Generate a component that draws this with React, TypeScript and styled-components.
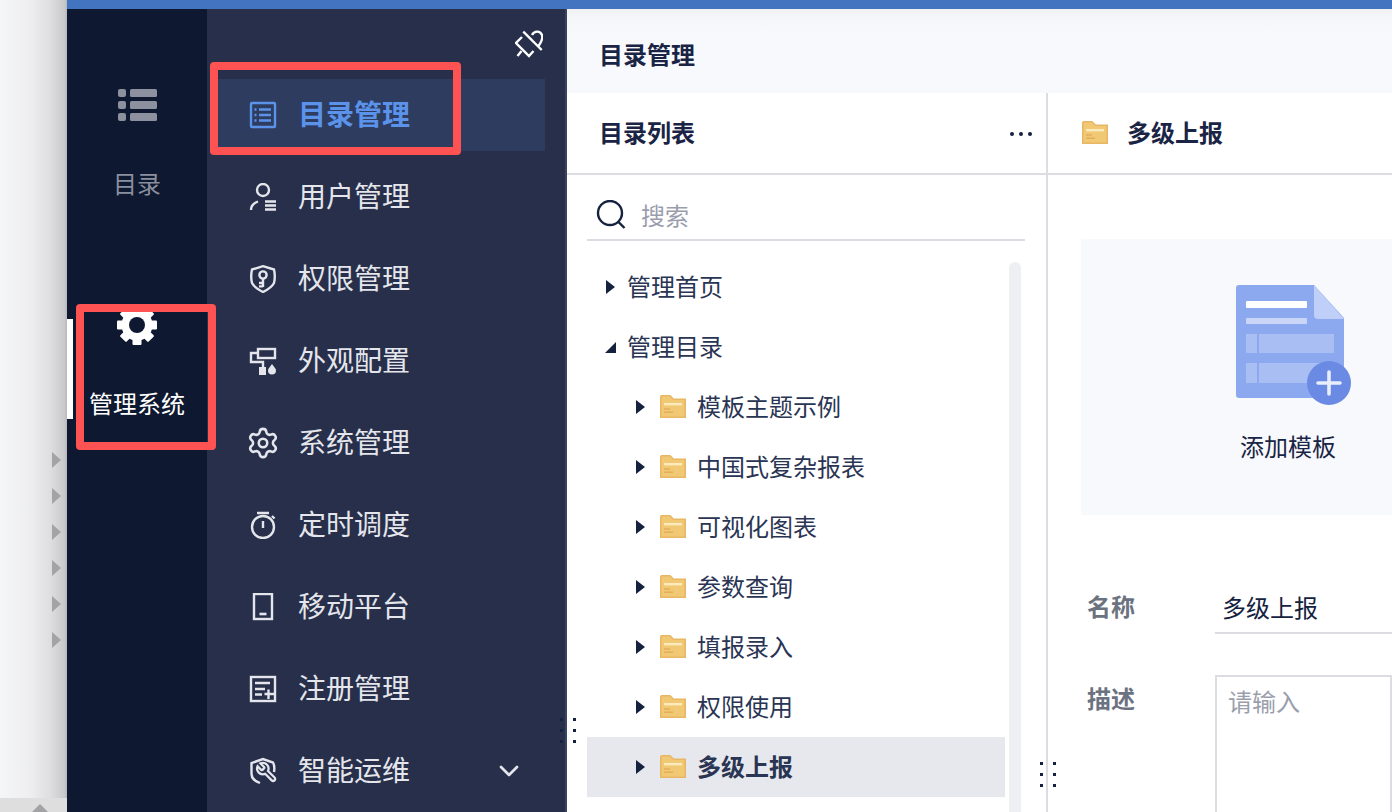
import React from "react"
import styled, { createGlobalStyle } from "styled-components"
import { ChevronDown, Settings } from "lucide-react"

const GlobalStyle = createGlobalStyle`
  html, body {
    margin: 0;
    padding: 0;
    background: #fff;
    overflow: hidden;
  }
  * {
    box-sizing: border-box;
  }
  body {
    font-family: "Noto Sans CJK SC", "Liberation Sans", sans-serif;
    color: #1a2444;
  }
`

const ListIcon = () => (
  <svg width="40" height="32" viewBox="0 0 40 32" fill="#8d909e" style={{ marginLeft: 1 }}>
    <rect x="0" y="0" width="8" height="8" rx="2" />
    <rect x="12" y="0" width="27" height="8" rx="1.5" />
    <rect x="0" y="12" width="8" height="8" rx="2" />
    <rect x="12" y="12" width="27" height="8" rx="1.5" />
    <rect x="0" y="24" width="8" height="8" rx="2" />
    <rect x="12" y="24" width="27" height="8" rx="1.5" />
  </svg>
)

const SolidGear = () => (
  <svg width="40" height="40" viewBox="0 0 40 40">
    <g fill="#fff">
      <circle cx="20" cy="20" r="15.5" />
      {[0, 45, 90, 135, 180, 225, 270, 315].map((a) => (
        <rect key={a} x="15.5" y="0" width="9" height="8" rx="1" transform={`rotate(${a} 20 20)`} />
      ))}
    </g>
    <circle cx="20" cy="20" r="8" fill="#0e1830" />
  </svg>
)

const Line = styled.svg`
  width: 28px;
  height: 28px;
  flex-shrink: 0;
  fill: none;
  stroke: currentColor;
  stroke-width: 2.4;
`

const DirIcon = () => (
  <Line viewBox="0 0 28 28">
    <rect x="2" y="2" width="24" height="24" rx="1" />
    <path d="M10 8.5H22M10 14H22M10 19.5H22" />
    <path d="M5.5 8.5H7.5M5.5 14H7.5M5.5 19.5H7.5" />
  </Line>
)

const UserIcon = () => (
  <Line viewBox="0 0 28 28">
    <circle cx="14" cy="7" r="6" />
    <path d="M2 27C2 23 5 20 9 18.5" />
    <path d="M16 18.5H27M16 22.5H27M16 26.5H27" strokeWidth="2.4" />
  </Line>
)

const ShieldIcon = () => (
  <Line viewBox="0 0 28 28">
    <path d="M14 1.2L25 4.5C26 9 26 14 25 18C23 22 18 25 14 27C10 25 5 22 3 18C2 14 2 9 3 4.5Z" />
    <circle cx="14" cy="10" r="3.6" />
    <path d="M14 13.6V22M10 18H14M10 21.4H14" />
  </Line>
)

const RollerIcon = () => (
  <Line viewBox="0 0 28 28">
    <rect x="9" y="2" width="17" height="9" />
    <path d="M9 6H2V15H14V21" />
    <rect x="10" y="20" width="7" height="8" fill="currentColor" stroke="none" />
    <path d="M23 17C25 20 27 21.5 27 23.5A4 4 0 0 1 19 23.5C19 21.5 21 20 23 17Z" fill="currentColor" stroke="none" />
  </Line>
)

const GearIcon = () => <Settings size={34} strokeWidth={1.8} style={{ flexShrink: 0 }} />

const TimerIcon = () => (
  <Line viewBox="0 0 28 28">
    <circle cx="14" cy="16" r="11" />
    <path d="M8 2H20M14 10V17M23 5L25.5 7.5" strokeWidth="2.4" />
  </Line>
)

const PhoneIcon = () => (
  <Line viewBox="0 0 28 28">
    <rect x="5" y="1" width="18" height="25" />
    <path d="M10.5 21H17.5" strokeWidth="2.6" />
  </Line>
)

const RegisterIcon = () => (
  <Line viewBox="0 0 28 28">
    <rect x="2" y="2" width="24" height="24" />
    <path d="M6 8H21M6 14H16M6 19.5H13M15.5 19H25M19.5 14.5V24" />
  </Line>
)

const OpsIcon = () => (
  <Line viewBox="0 0 28 28">
    <path d="M11 26C6 24 2.5 22 2.5 17V6L14 2L24 5.5C25.5 8 25.5 12 25 15" />
    <path
      transform="translate(29 4) scale(-0.95 0.95)"
      d="M14.7 6.3a1 1 0 0 0 0 1.4l1.6 1.6a1 1 0 0 0 1.4 0l3.77-3.77a6 6 0 0 1-7.94 7.94l-6.91 6.91a2.12 2.12 0 0 1-3-3l6.91-6.91a6 6 0 0 1 7.94-7.94l-3.76 3.76z"
    />
  </Line>
)

const PinOffIcon = () => (
  <svg width="28" height="28" viewBox="0 0 28 28" fill="none" stroke="#fff" strokeWidth="2.4">
    <path d="M8.3 1.7L26.7 20" />
    <path d="M7 7L1 13L14 26L18.5 21" />
    <path d="M6.5 21L2.5 26" />
    <path d="M17 5C19 1 25 0 27 5C28 8 27 11 23.5 16" />
  </svg>
)

const SearchIcon = () => (
  <svg width="30" height="30" viewBox="0 0 30 30" fill="none" stroke="#14213f" strokeWidth="2.4">
    <circle cx="14" cy="13" r="12" />
    <path d="M22.5 22L28.5 28" />
  </svg>
)

const FolderIcon = () => (
  <svg width="26" height="23" viewBox="0 0 26 23">
    <path d="M0.8 1.8Q0.8 0.8 1.8 0.8H10L13.5 4.2H25.2V22.2H0.8Z" fill="#f1c874" stroke="#e8b765" strokeWidth="1.6" />
    <rect x="4" y="8" width="18" height="2.4" fill="#fbeabb" />
    <path d="M4 14H10M4 17.2H13" stroke="#e2ae57" strokeWidth="1.4" />
  </svg>
)

const TemplateIcon = () => (
  <svg width="115" height="120" viewBox="0 0 115 120">
    <path d="M3 0H78L108 33V113H3Q0 113 0 110V3Q0 0 3 0Z" fill="#8ca8ee" />
    <path d="M78 0L108 34H82Q78 34 78 30Z" fill="#bfcff8" />
    <rect x="10" y="16" width="61" height="7" rx="1" fill="#fff" />
    <rect x="10" y="33" width="61" height="6" rx="1" fill="#c9d6f8" />
    <rect x="10" y="49" width="11" height="19" fill="#a9bef3" />
    <rect x="23" y="49" width="75" height="19" fill="#a9bef3" />
    <rect x="10" y="78" width="11" height="20" fill="#a9bef3" />
    <rect x="23" y="78" width="75" height="20" fill="#a9bef3" />
    <circle cx="93" cy="98" r="22" fill="#6b8ae3" />
    <path d="M93 87V109M82 98H104" stroke="#e9eefc" strokeWidth="3.6" strokeLinecap="round" />
  </svg>
)

const Page = styled.div`
  position: relative;
  display: flex;
  width: 1392px;
  height: 812px;
  overflow: hidden;
`

const Strip = styled.div`
  width: 67px;
  flex-shrink: 0;
  display: flex;
  flex-direction: column;
  align-items: flex-end;
  gap: 20px;
  padding-top: 452px;
  background: linear-gradient(90deg, #f5f6f8 0%, #eeeef0 45%, #dedee0 75%, #c9c9cb 96%, #b8b8ba 100%);
`

const StripArrow = styled.span`
  width: 0;
  height: 0;
  margin-right: 6px;
  border-left: 9px solid #a3a3a5;
  border-top: 8px solid transparent;
  border-bottom: 8px solid transparent;
`

const StripFooter = styled.div`
  align-self: stretch;
  height: 14px;
  margin-top: auto;
  background: #dedede;
  display: flex;
  justify-content: center;
  padding-left: 13px;

  &::before {
    content: "";
    width: 0;
    height: 0;
    border-left: 8px solid transparent;
    border-right: 8px solid transparent;
    border-bottom: 8px solid #a3a3a5;
    margin-top: 6px;
  }
`

const Shell = styled.div`
  flex: 1;
  min-width: 0;
  display: flex;
  flex-direction: column;
`

const TopBar = styled.div`
  height: 9px;
  flex-shrink: 0;
  background: #4374bf;
`

const Body = styled.div`
  flex: 1;
  min-height: 0;
  display: flex;
`

const Rail = styled.nav`
  width: 140px;
  flex-shrink: 0;
  background: #0e1830;
`

const RailItem = styled.div<{ $active?: boolean }>`
  position: relative;
  height: 220px;
  display: flex;
  flex-direction: column;
  align-items: center;
  justify-content: flex-start;
  padding-top: ${(p) => (p.$active ? 76 : 80)}px;
  color: ${(p) => (p.$active ? "#fff" : "#8a8f9d")};

  &::before {
    content: "";
    display: ${(p) => (p.$active ? "block" : "none")};
    position: absolute;
    left: 0;
    top: 90px;
    width: 6px;
    height: 100px;
    background: #fff;
  }
`

const RailLabel = styled.span<{ $active?: boolean }>`
  font-size: 24px;
  line-height: 34px;
  margin-top: ${(p) => (p.$active ? 41 : 45)}px;
`

const Menu = styled.div`
  width: 360px;
  flex-shrink: 0;
  background: #272f4b;
  border-right: 2px solid #3a4360;
  display: flex;
  flex-direction: column;
`

const PinRow = styled.div`
  height: 70px;
  flex-shrink: 0;
  display: flex;
  justify-content: flex-end;
  padding: 21px 22px 0 0;
`

const MenuList = styled.div`
  display: flex;
  flex-direction: column;
  gap: 10px;
`

const MenuRow = styled.div<{ $active?: boolean }>`
  height: 72px;
  flex-shrink: 0;
  width: 328px;
  margin-left: 10px;
  display: flex;
  align-items: center;
  gap: 21px;
  padding: 0 20px 0 32px;
  background: ${(p) => (p.$active ? "#2e3c5f" : "transparent")};
  color: ${(p) => (p.$active ? "#5b93ea" : "#e4e6ec")};
`

const MenuIconBox = styled.span`
  width: 28px;
  height: 30px;
  display: flex;
  align-items: center;
  justify-content: center;
  flex-shrink: 0;
`

const MenuLabel = styled.span<{ $active?: boolean }>`
  flex: 1;
  font-size: 28px;
  line-height: 40px;
  margin-bottom: 4px;
  font-weight: ${(p) => (p.$active ? 700 : 400)};
`

const Main = styled.main`
  flex: 1;
  min-width: 0;
  display: flex;
  flex-direction: column;
`

const PageHeader = styled.header`
  height: 84px;
  flex-shrink: 0;
  display: flex;
  align-items: center;
  padding: 4px 0 0 32px;
  background: linear-gradient(180deg, #f1f1f3 0, #f6f7fa 10px, #f8f9fd 30px);
  font-size: 24px;
  font-weight: 700;
`

const Columns = styled.div`
  flex: 1;
  min-height: 0;
  display: flex;
`

const TreePane = styled.section`
  position: relative;
  width: 481px;
  flex-shrink: 0;
  border-right: 2px solid #dcdde3;
  display: flex;
  flex-direction: column;
`

const PaneHead = styled.div`
  height: 82px;
  flex-shrink: 0;
  display: flex;
  align-items: center;
  justify-content: space-between;
  padding: 0 14px 0 33px;
  border-bottom: 2px solid #dcdde3;
  font-size: 24px;
  font-weight: 700;
`

const HeadText = styled.span`
  margin: 0 0 4px -1px;
`

const More = styled.span`
  display: flex;
  gap: 5px;
  margin-top: 2px;

  & > i {
    width: 4px;
    height: 4px;
    border-radius: 50%;
    background: #14213f;
  }
`

const SearchBar = styled.div`
  width: 438px;
  height: 66px;
  flex-shrink: 0;
  margin-left: 20px;
  padding: 16px 0 0 9px;
  display: flex;
  align-items: center;
  gap: 15px;
  border-bottom: 2px solid #dcdde3;
  font-size: 24px;
  color: #9a9eac;
`

const SearchText = styled.span`
  margin-bottom: 2px;
`

const Tree = styled.div`
  width: 418px;
  margin: 16px 0 0 20px;
`

const TreeRow = styled.div<{ $level: number; $selected?: boolean }>`
  height: 60px;
  display: flex;
  align-items: center;
  padding-left: ${(p) => (p.$level ? 49 : 19)}px;
  font-size: 24px;
  color: #2a3453;
  font-weight: ${(p) => (p.$selected ? 700 : 400)};
  background: ${(p) => (p.$selected ? "#e7e8ed" : "transparent")};
`

const TreeText = styled.span`
  margin-bottom: 4px;
`

const Caret = styled.span<{ $open?: boolean }>`
  width: 0;
  height: 0;
  flex-shrink: 0;
  border-style: solid;
  border-color: ${(p) => (p.$open ? "transparent transparent #14213f transparent" : "transparent transparent transparent #14213f")};
  border-width: ${(p) => (p.$open ? "0 0 11px 11px" : "7.5px 0 7.5px 9px")};
  margin-left: ${(p) => (p.$open ? -1 : 0)}px;
  margin-right: ${(p) => (p.$open ? 11 : 12)}px;
`

const FolderBox = styled.span`
  display: flex;
  margin: 0 11px 2px 3px;
  flex-shrink: 0;
`

const ScrollTrack = styled.div`
  position: absolute;
  left: 442px;
  top: 169px;
  width: 12px;
  bottom: -10px;
  border-radius: 6px;
  background: #eeeff2;
`

const DragDots = styled.div<{ $left: number; $top: number }>`
  position: absolute;
  left: ${(p) => p.$left}px;
  top: ${(p) => p.$top}px;
  display: grid;
  grid-template-columns: 3px 3px;
  column-gap: 10px;
  row-gap: 8px;

  & > i {
    width: 3px;
    height: 3px;
    background: #14213f;
  }
`

const DetailPane = styled.section`
  flex: 1;
  min-width: 0;
  display: flex;
  flex-direction: column;
  overflow: hidden;
`

const DetailHead = styled(PaneHead)`
  justify-content: flex-start;
  gap: 20px;
  padding-left: 34px;

  & > svg {
    margin-bottom: 2px;
  }
`

const DetailBody = styled.div`
  padding: 64px 0 0 33px;
`

const AddCard = styled.div`
  width: 420px;
  height: 276px;
  display: flex;
  flex-direction: column;
  padding: 46px 0 0 155px;
  background: #f8f9fd;
  font-size: 24px;
`

const AddLabel = styled.span`
  margin: 24px 0 0 4px;
  line-height: 34px;
`

const FormRow = styled.div<{ $gap: number }>`
  display: flex;
  margin-top: ${(p) => p.$gap}px;
`

const FieldLabel = styled.div<{ $height: number }>`
  width: 134px;
  flex-shrink: 0;
  padding-left: 6px;
  font-size: 24px;
  font-weight: 700;
  color: #6b7280;
  line-height: ${(p) => p.$height}px;
`

const TextField = styled.div`
  width: 300px;
  height: 53px;
  padding: 9px 0 0 7px;
  border-bottom: 2px solid #dcdde3;
  font-size: 24px;
  line-height: 34px;
  color: #14213f;
`

const TextArea = styled.div`
  width: 300px;
  height: 200px;
  padding: 7px 11px;
  border: 2px solid #dcdde3;
  font-size: 24px;
  line-height: 34px;
  color: #9a9eac;
`

const Callout = styled.div<{ $x: number; $y: number; $w: number; $h: number }>`
  position: absolute;
  left: ${(p) => p.$x}px;
  top: ${(p) => p.$y}px;
  width: ${(p) => p.$w}px;
  height: ${(p) => p.$h}px;
  border: 8px solid #ff5252;
  border-radius: 4px;
  pointer-events: none;
`

const menuItems = [
  { label: "目录管理", icon: <DirIcon />, active: true },
  { label: "用户管理", icon: <UserIcon /> },
  { label: "权限管理", icon: <ShieldIcon /> },
  { label: "外观配置", icon: <RollerIcon /> },
  { label: "系统管理", icon: <GearIcon /> },
  { label: "定时调度", icon: <TimerIcon /> },
  { label: "移动平台", icon: <PhoneIcon /> },
  { label: "注册管理", icon: <RegisterIcon /> },
  { label: "智能运维", icon: <OpsIcon />, more: true },
]

const folders = ["模板主题示例", "中国式复杂报表", "可视化图表", "参数查询", "填报录入", "权限使用", "多级上报"]

const Dots = () => (
  <>
    {[0, 1, 2, 3, 4, 5].map((i) => (
      <i key={i} />
    ))}
  </>
)

export default function App() {
  return (
    <Page>
      <GlobalStyle />
      <Strip>
        {[0, 1, 2, 3, 4, 5].map((i) => (
          <StripArrow key={i} />
        ))}
        <StripFooter />
      </Strip>
      <Shell>
        <TopBar />
        <Body>
          <Rail>
            <RailItem>
              <ListIcon />
              <RailLabel>目录</RailLabel>
            </RailItem>
            <RailItem $active>
              <SolidGear />
              <RailLabel $active>管理系统</RailLabel>
            </RailItem>
          </Rail>
          <Menu>
            <PinRow>
              <PinOffIcon />
            </PinRow>
            <MenuList>
              {menuItems.map((m) => (
                <MenuRow key={m.label} $active={m.active}>
                  <MenuIconBox>{m.icon}</MenuIconBox>
                  <MenuLabel $active={m.active}>{m.label}</MenuLabel>
                  {m.more && <ChevronDown size={32} strokeWidth={2} />}
                </MenuRow>
              ))}
            </MenuList>
          </Menu>
          <Main>
            <PageHeader>目录管理</PageHeader>
            <Columns>
              <TreePane>
                <PaneHead>
                  <HeadText>目录列表</HeadText>
                  <More>
                    <i />
                    <i />
                    <i />
                  </More>
                </PaneHead>
                <SearchBar>
                  <SearchIcon />
                  <SearchText>搜索</SearchText>
                </SearchBar>
                <Tree>
                  <TreeRow $level={0}>
                    <Caret />
                    <TreeText>管理首页</TreeText>
                  </TreeRow>
                  <TreeRow $level={0}>
                    <Caret $open />
                    <TreeText>管理目录</TreeText>
                  </TreeRow>
                  {folders.map((f) => (
                    <TreeRow key={f} $level={1} $selected={f === "多级上报"}>
                      <Caret />
                      <FolderBox>
                        <FolderIcon />
                      </FolderBox>
                      <TreeText>{f}</TreeText>
                    </TreeRow>
                  ))}
                </Tree>
                <ScrollTrack />
              </TreePane>
              <DetailPane>
                <DetailHead>
                  <FolderIcon />
                  <HeadText>多级上报</HeadText>
                </DetailHead>
                <DetailBody>
                  <AddCard>
                    <TemplateIcon />
                    <AddLabel>添加模板</AddLabel>
                  </AddCard>
                  <FormRow $gap={66}>
                    <FieldLabel $height={50}>名称</FieldLabel>
                    <TextField>多级上报</TextField>
                  </FormRow>
                  <FormRow $gap={41}>
                    <FieldLabel $height={46}>描述</FieldLabel>
                    <TextArea>请输入</TextArea>
                  </FormRow>
                </DetailBody>
              </DetailPane>
            </Columns>
          </Main>
        </Body>
      </Shell>
      <DragDots $left={560} $top={718}>
        <Dots />
      </DragDots>
      <DragDots $left={1040} $top={762}>
        <Dots />
      </DragDots>
      <Callout $x={210} $y={62} $w={251} $h={93} />
      <Callout $x={76} $y={304} $w={140} $h={146} />
    </Page>
  )
}
